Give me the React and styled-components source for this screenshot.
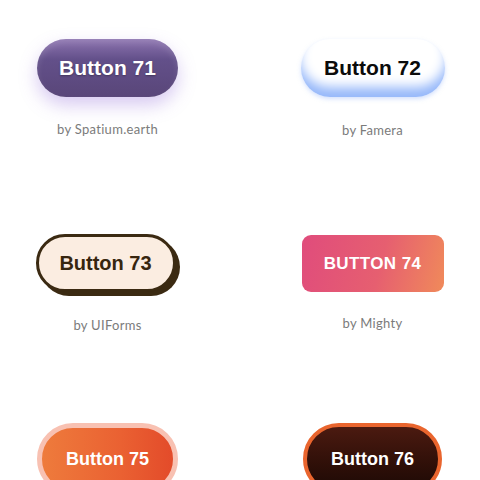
import styled, { createGlobalStyle, css } from 'styled-components'

const GlobalStyle = createGlobalStyle`
	html, body {
		margin: 0;
		padding: 0;
		background: #ffffff;
	}
`

const Page = styled.div`
	width: 480px;
	height: 480px;
	overflow: hidden;
	box-sizing: border-box;
	padding-top: 39px;
	display: grid;
	grid-template-columns: 215px 215px;
	grid-template-rows: 195px 189px auto;
	column-gap: 50px;
`

const Cell = styled.div`
	display: flex;
	flex-direction: column;
	align-items: center;
`

const Caption = styled.p`
	margin: ${(p) => p.$gap || 24}px 0 0;
	padding: 0;
	font-family: Lato, "Open Sans", sans-serif;
	font-size: 13px;
	line-height: 16px;
	color: #7b7b7b;
	letter-spacing: 0.3px;
`

const base = css`
	box-sizing: border-box;
	display: flex;
	align-items: center;
	justify-content: center;
	font-family: "Liberation Sans", Arial, sans-serif;
	font-weight: 700;
	border: none;
	cursor: pointer;
	padding: 0;
`

const Purple = styled.button`
	${base}
	width: 141px;
	height: 58px;
	border-radius: 29px;
	font-size: 21px;
	color: #ffffff;
	background: linear-gradient(180deg, #8d74b0 0%, #63508a 35%, #594679 100%);
	box-shadow: 0 8px 18px rgba(140, 100, 215, 0.35), inset 0 4px 6px rgba(255, 255, 255, 0.12);
	text-shadow: 0 1px 2px rgba(0, 0, 0, 0.3);
`

const Cloud = styled.button`
	${base}
	width: 144px;
	height: 58px;
	border-radius: 29px;
	font-size: 21px;
	color: #0b0b0b;
	background: #ffffff;
	box-shadow: inset 0 -12px 12px -2px rgba(150, 184, 250, 1), 0 2px 4px rgba(170, 196, 251, 0.5);
`

const Retro = styled.button`
	${base}
	width: 140px;
	height: 58px;
	margin-right: 4px;
	border-radius: 29px;
	font-size: 20px;
	color: #37260f;
	background: #fbede1;
	border: 3px solid #3b2a12;
	box-shadow: 4px 4px 0 #3b2a12;
`

const Sunset = styled.button`
	${base}
	width: 142px;
	height: 57px;
	margin-top: 1px;
	border-radius: 9px;
	font-size: 17px;
	letter-spacing: 0.4px;
	color: #ffffff;
	background: linear-gradient(105deg, #e04c7c 0%, #e65f70 55%, #f08a5a 100%);
	text-transform: uppercase;
`

const Ember = styled.button`
	${base}
	width: 141px;
	height: 72px;
	border-radius: 36px;
	font-size: 18px;
	color: #ffffff;
	background: linear-gradient(90deg, #ee7b3c 0%, #ea6132 60%, #e34b2a 100%);
	border: 5px solid #f8c1b2;
`

const Coal = styled.button`
	${base}
	width: 139px;
	height: 72px;
	border-radius: 36px;
	font-size: 18px;
	color: #ffffff;
	background: linear-gradient(180deg, #4b1a10 0%, #2e0f08 60%, #1c0905 100%);
	border: 4px solid #e9652e;
`

export default function App() {
	return (
		<>
			<GlobalStyle />
			<Page>
				<Cell>
					<Purple>Button 71</Purple>
					<Caption>by Spatium.earth</Caption>
				</Cell>
				<Cell>
					<Cloud>Button 72</Cloud>
					<Caption $gap={25}>by Famera</Caption>
				</Cell>
				<Cell>
					<Retro>Button 73</Retro>
					<Caption $gap={25}>by UIForms</Caption>
				</Cell>
				<Cell>
					<Sunset>Button 74</Sunset>
					<Caption $gap={23}>by Mighty</Caption>
				</Cell>
				<Cell>
					<Ember>Button 75</Ember>
				</Cell>
				<Cell>
					<Coal>Button 76</Coal>
				</Cell>
			</Page>
		</>
	)
}
